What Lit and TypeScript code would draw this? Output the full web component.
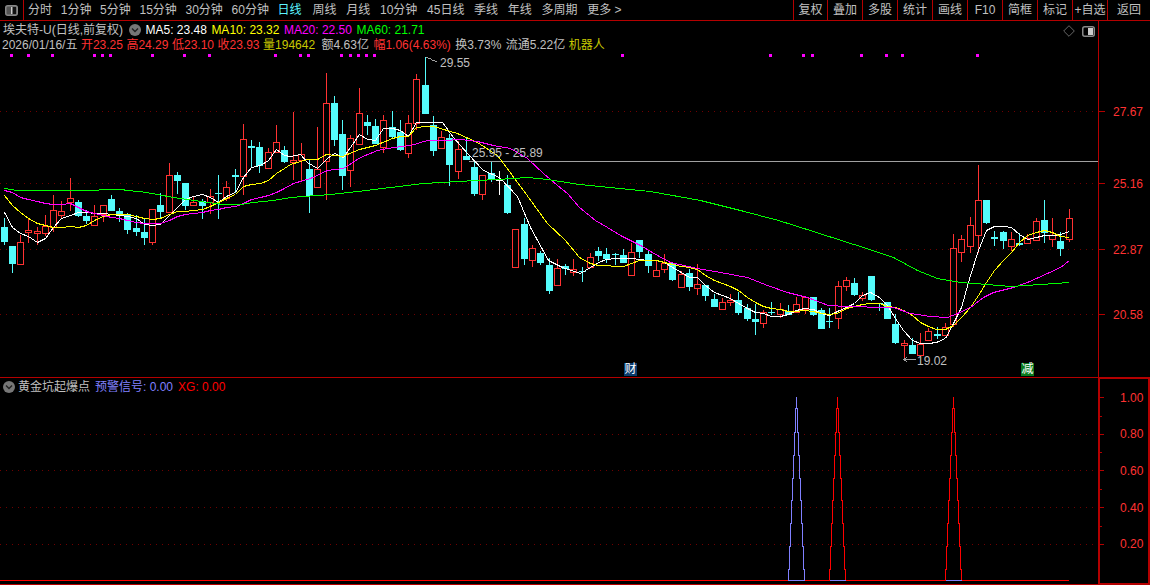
import { LitElement, html, svg, css } from "lit";
import { customElement } from "lit/decorators.js";

// candle: [kind, high, top, bottom, low]; kind r=rising (hollow red), c=falling (cyan), w=doji white
type C = [string, number, number, number, number];
const CANDLES: C[] = [
["c",218,227,242,245],["c",246,246,264,273],["r",235,242,264,264],["r",218,230,232,243],["r",227,231,233,245],
["r",215,226,233,236],["r",195,210,227,232],["r",201,211,215,219],["r",178,198,202,211],["c",200,202,216,217],
["c",210,216,221,224],["r",205,216,225,225],["r",205,205,214,222],["c",195,199,211,211],["c",208,211,214,222],
["c",213,214,230,234],["c",215,228,232,236],["c",219,232,238,245],["r",209,209,242,245],["c",193,205,212,218],
["r",163,175,212,212],["c",172,175,181,194],["c",183,183,206,210],["r",196,202,205,205],["c",199,201,206,219],
["r",189,196,202,214],["c",175,193,194,219],["r",181,187,198,201],["c",169,175,177,193],["r",124,139,176,195],
["c",140,146,148,167],["c",142,147,166,173],["r",148,152,168,168],["r",125,142,152,152],["c",146,150,162,163],
["r",112,160,162,180],["r",143,154,160,181],["c",160,169,196,213],["r",127,169,187,187],["r",73,103,161,200],
["c",96,103,140,146],["c",120,134,176,190],["r",135,138,170,187],["r",88,113,144,144],["c",115,122,126,135],
["c",119,126,144,144],["r",115,120,147,153],["c",111,127,137,138],["c",120,132,150,151],["r",115,123,153,158],
["r",74,79,123,130],["c",57,85,114,114],["c",116,125,151,156],["r",131,137,148,148],["c",134,138,165,186],
["r",141,149,171,179],["c",138,156,160,160],["c",161,167,194,196],["r",175,175,194,200],["c",162,173,180,182],
["w",171,180,181,195],["c",175,185,213,214],["r",229,229,267,267],["c",218,224,259,265],["r",245,248,260,267],
["c",251,253,263,265],["c",258,265,291,294],["r",259,268,285,285],["c",264,266,269,275],["r",259,269,272,276],
["c",267,271,272,282],["r",253,257,267,267],["c",247,251,256,261],["c",248,254,259,263],["c",253,254,255,265],
["c",249,255,263,263],["r",243,252,275,275],["c",240,240,252,258],["c",251,254,266,273],["r",261,270,276,277],
["r",254,263,269,273],["c",262,263,280,281],["r",271,274,287,287],["c",269,273,287,291],["r",264,284,288,295],
["c",285,285,296,301],["c",294,299,307,307],["r",298,302,309,309],["r",294,300,302,306],["c",292,300,313,315],
["c",304,308,319,321],["c",304,319,322,335],["r",310,312,323,328],["c",302,312,313,315],["r",303,309,314,318],
["c",305,311,315,315],["r",297,304,312,312],["r",296,297,309,314],["c",297,297,315,316],["c",308,310,329,329],
["c",308,321,322,328],["r",281,286,318,329],["r",277,280,286,291],["c",278,283,295,296],["r",292,295,298,301],
["c",276,276,300,301],["c",303,303,304,311],["c",302,302,319,319],["c",314,324,343,344],["r",340,343,345,361],
["c",338,345,354,354],["r",333,344,355,355],["r",328,331,340,340],["c",327,334,336,339],["r",323,327,335,335],
["r",234,248,324,327],["r",235,239,252,262],["r",217,225,246,253],["r",165,200,235,253],["c",200,200,223,224],
["c",231,237,239,246],["c",231,232,241,249],["r",232,239,246,251],["c",233,243,245,246],["r",234,238,243,243],
["r",218,221,240,240],["c",200,220,233,243],["r",218,235,239,247],["c",232,241,249,256],["r",209,218,239,242],
];

const MA5 = [[4,212],[12,227],[20,233],[28,236],[37,242],[45,238],[53,227],[61,218],[70,215],[78,212],[86,212],[94,213],[103,213],[111,214],[119,215],[127,216],[136,218],[144,224],[152,225],[160,224],[169,215],[177,207],[185,199],[193,196],[202,194],[210,197],[218,202],[226,196],[235,192],[243,177],[251,167],[260,165],[268,160],[276,149],[284,155],[290,156],[300,154],[307,162],[317,168],[327,158],[334,153],[343,157],[359,134],[367,139],[375,140],[383,128],[392,128],[400,130],[408,136],[416,122],[425,122],[433,122],[442,122],[453,137],[467,153],[483,170],[499,177],[517,196],[530,227],[548,260],[562,267],[580,273],[590,267],[598,262],[606,259],[615,258],[623,258],[631,258],[639,259],[648,260],[656,260],[664,262],[672,267],[681,272],[689,277],[697,277],[705,285],[714,292],[722,295],[730,298],[738,303],[747,308],[755,312],[763,313],[771,316],[780,316],[788,314],[796,310],[804,308],[813,309],[821,313],[829,315],[837,311],[846,307],[854,303],[862,295],[870,292],[879,297],[887,305],[895,318],[903,330],[912,340],[920,343],[928,343],[936,342],[945,338],[953,323],[961,307],[970,275],[978,250],[986,230],[994,226],[1003,226],[1011,227],[1019,234],[1027,239],[1036,237],[1044,235],[1052,235],[1060,234],[1069,231]];
const MA10 = [[4,195],[12,205],[20,212],[28,218],[37,223],[45,225],[53,227],[61,227],[70,226],[78,227],[86,225],[94,220],[103,216],[111,214],[119,214],[127,214],[136,216],[144,218],[152,219],[160,218],[169,214],[177,211],[185,211],[193,210],[202,209],[210,206],[218,202],[226,198],[235,194],[243,186],[251,184],[260,183],[268,180],[276,173],[284,168],[290,164],[307,159],[317,159],[326,154],[342,156],[359,149],[375,145],[392,138],[400,136],[408,136],[416,127],[425,126],[433,126],[457,133],[477,142],[497,155],[523,190],[547,223],[565,240],[579,257],[590,263],[598,265],[606,265],[615,266],[623,266],[631,263],[639,260],[648,260],[656,260],[664,262],[672,264],[681,266],[689,267],[697,269],[705,275],[714,280],[722,283],[730,286],[738,290],[747,297],[755,302],[763,306],[771,308],[780,309],[788,311],[796,311],[804,310],[813,311],[821,313],[829,314],[837,313],[846,308],[854,306],[862,304],[870,303],[879,303],[887,306],[895,307],[903,310],[912,315],[920,322],[928,326],[936,329],[945,329],[953,325],[961,317],[970,307],[978,295],[986,282],[994,270],[1003,260],[1011,252],[1019,242],[1027,235],[1036,232],[1044,230],[1052,232],[1060,236],[1069,237]];
const MA20 = [[4,190],[12,192],[20,197],[28,199],[37,201],[45,203],[53,204],[61,204],[70,203],[78,207],[86,211],[94,213],[103,215],[111,217],[119,218],[127,220],[136,222],[144,223],[152,223],[160,223],[169,220],[177,216],[185,214],[193,213],[202,212],[210,210],[218,209],[226,207],[235,206],[243,203],[251,199],[260,197],[268,195],[276,192],[284,188],[293,183],[310,178],[327,170],[343,168],[360,157],[377,150],[393,147],[410,145],[427,140],[443,140],[460,139],[477,141],[493,145],[510,148],[527,158],[543,173],[557,185],[567,193],[579,207],[595,220],[607,227],[620,235],[640,245],[657,255],[670,262],[697,268],[720,272],[747,277],[767,285],[787,292],[807,297],[828,305],[847,306],[860,306],[873,307],[893,307],[910,313],[930,316],[947,317],[957,313],[970,307],[983,297],[993,292],[1013,287],[1027,282],[1047,273],[1060,267],[1069,260]];
const MA60 = [[4,188],[17,190],[97,190],[100,189],[123,189],[125,190],[140,191],[157,194],[173,197],[187,199],[207,202],[223,204],[240,204],[253,202],[273,200],[290,197],[330,194],[357,191],[390,187],[423,183],[457,181],[497,179],[527,177],[547,179],[579,184],[650,191],[700,200],[740,210],[778,220],[813,231],[847,242],[860,246],[893,257],[917,270],[937,278],[960,282],[987,284],[1010,286],[1040,284],[1069,282]];

const SIGNALS = [11,28,52,94,102,110,152,184,209,275,300,308,341,350,358,366,374,622,770,803,812,861,886,902,977];
const TABS_A = ["分时","1分钟","5分钟","15分钟","30分钟","60分钟","日线"];
const TABS_B = ["周线","月线","10分钟","45日线","季线","年线","多周期","更多 >"];
const TOOLS = ["复权","叠加","多股","统计","画线","F10","简框","标记","+自选","返回"];
const GRID_TOP = [111,183,249,314];
const GRID_SUB = [434,470,507,544];
const PX_AXIS: [number, string][] = [[116,"27.67"],[188,"25.16"],[254,"22.87"],[319,"20.58"]];
const SUB_AXIS: [number, string][] = [[402,"1.00"],[438,"0.80"],[475,"0.60"],[512,"0.40"],[548,"0.20"]];
const STEP_Y = [397,408,432,455,478,500,523,546,569,580];

const cx = (i: number) => Math.floor(4 + i * 8.2578);
const pts = (a: number[][]) => a.map(([x, y]) => `${x + 0.5},${y + 0.5}`).join(" ");

// staircase outline of one indicator spike: up the left side, down the right
function spike(c: number): string {
  const left: string[] = [];
  const right: string[] = [];
  for (let i = 0; i < STEP_Y.length - 1; i++) {
    left.unshift(`${c - i + 0.5},${STEP_Y[i + 1]}`, `${c - i + 0.5},${STEP_Y[i]}`);
    right.push(`${c + i + 0.5},${STEP_Y[i]}`, `${c + i + 0.5},${STEP_Y[i + 1]}`);
  }
  return [...left, ...right].join(" ");
}

@customElement("app-root")
export class AppRoot extends LitElement {
  static styles = css`
    :host {
      display: block;
      width: 1150px;
      height: 585px;
      background: #000;
      overflow: hidden;
      color: #c0c0c0;
      font: 12px/14px "Liberation Sans", "Noto Sans CJK SC", sans-serif;
    }
    .nav { display: flex; height: 20px; border-bottom: 1px solid #b40000; }
    .layout-btn { width: 23px; display: flex; align-items: center; justify-content: center; border-right: 1px solid #b40000; }
    .tabs { display: flex; align-items: center; padding-left: 4px; flex: 1; gap: 11px; }
    .group-a { display: flex; gap: 8.7px; }
    .group-b { display: flex; gap: 9.7px; }
    .tabs .on { color: #5cf4ff; }
    .tools { display: flex; }
    .tool { width: 35px; box-sizing: border-box; border-left: 1px solid #b40000; display: flex; align-items: center; justify-content: center; white-space: nowrap; }
    .tool:last-child { width: 43px; }
    .tool:first-child { width: 34px; }
    .panel { display: flex; }
    .top { height: 356px; }
    .bottom { height: 208px; }
    .plot { width: 1098px; position: relative; flex: none; }
    .bottom .plot { border-top: 1px solid #b40000; border-bottom: 1px solid #b40000; box-sizing: border-box; }
    svg.layer { position: absolute; left: 0; top: 0; display: block; }
    .top svg.layer { width: 1098px; height: 356px; }
    .bottom svg.layer { width: 1098px; height: 206px; }
    .axis { flex: 1; display: block; }
    .top .axis { border-left: 1px solid #b40000; }
    .bottom .axis { border: 2px solid #b40000; box-sizing: border-box; }
    .axis svg { display: block; width: 100%; height: 100%; }
    .info { position: relative; display: flex; align-items: center; white-space: nowrap; height: 15px; }
    .r1 { padding: 1px 0 0 3px; gap: 4.5px; }
    .r2 { padding-left: 2px; gap: 3.5px; }
    .r3 { padding: 1px 0 0 3px; gap: 5px; }
    .marks { position: absolute; top: 4px; right: 3px; display: flex; align-items: center; gap: 7px; }
    .white { color: #fff; } .yellow { color: #ffff00; } .pink { color: #ff00ff; } .green { color: #00ff00; }
    .red { color: #ff3232; } .olive { color: #c8c800; } .blue { color: #8080ff; } .pure { color: #ff0000; }
    .after-title { margin-left: 1.5px; }
    .after-icon { margin-left: -2px; }
    .m1 { margin-left: 1px; }
    .m3 { margin-left: 3px; }
    .badge { position: absolute; top: 342px; width: 13px; height: 13px; color: #fff; display: flex; align-items: center; justify-content: center; font-size: 12px; line-height: 13px; }
    .cai { left: 624px; background: #0a3c6e; }
    .jian { left: 1021px; background: #0a7a1e; }
    svg text { font: 12px "Liberation Sans", "Noto Sans CJK SC", sans-serif; }
    .label { fill: #c0c0c0; }
    .tick-label { fill: #ff3232; }
  `;

  private chevron(cls = "") {
    return html`<svg class=${cls} width="12" height="12" viewBox="0 0 12 12"><circle cx="6" cy="6" r="6" fill="#777"/><path d="M3 4.5 6 7.5 9 4.5" fill="none" stroke="#222" stroke-width="1.4"/></svg>`;
  }

  private priceChart() {
    return svg`<svg class="layer" viewBox="0 21 1098 356" shape-rendering="crispEdges">
      ${GRID_TOP.map((y) => svg`<line x1="0" x2="1098" y1=${y + 0.5} y2=${y + 0.5} stroke="#700000" stroke-dasharray="1 5"/>`)}
      ${SIGNALS.map((x) => svg`<rect x=${x - 1} y="54" width="3" height="3" fill="#ff00ff"/>`)}
      <line x1="469" x2="1098" y1="161.5" y2="161.5" stroke="#a0a0a0"/>
      ${CANDLES.map((c, i) => {
        const x = cx(i);
        const [k, hi, top, bot, lo] = c;
        const col = k === "r" ? "#ff3232" : k === "w" ? "#ffffff" : "#54fcfc";
        if (k === "r") {
          return svg`<line x1=${x + 0.5} x2=${x + 0.5} y1=${hi} y2=${top} stroke=${col}/>
            <line x1=${x + 0.5} x2=${x + 0.5} y1=${bot} y2=${lo} stroke=${col}/>
            <rect x=${x - 2.5} y=${top + 0.5} width="6" height=${Math.max(bot - top, 1)} fill="#000" stroke=${col}/>`;
        }
        return svg`<line x1=${x + 0.5} x2=${x + 0.5} y1=${hi} y2=${lo} stroke=${col}/>
          <rect x=${x - 3} y=${top} width="7" height=${Math.max(bot - top, 1)} fill=${col}/>`;
      })}
      <polyline points=${pts(MA5)} fill="none" stroke="#ffffff"/>
      <polyline points=${pts(MA10)} fill="none" stroke="#ffff00"/>
      <polyline points=${pts(MA20)} fill="none" stroke="#ff00ff"/>
      <polyline points=${pts(MA60)} fill="none" stroke="#00ff00"/>
      <polyline points="426,57.5 430,58.5 433,60.5 437,61.5" fill="none" stroke="#a0a0a0"/>
      <text class="label" x="440" y="67">29.55</text>
      <text class="label" x="472" y="157">25.95 - 25.89</text>
      <polyline points="907,357 904,359.5 907,362" fill="none" stroke="#a0a0a0"/>
      <line x1="904" x2="916" y1="359.5" y2="359.5" stroke="#a0a0a0"/>
      <text class="label" x="917" y="365">19.02</text>
    </svg>`;
  }

  private priceAxis() {
    return svg`<svg viewBox="1099 21 51 356" shape-rendering="crispEdges">
      ${GRID_TOP.map((y) => svg`<line x1="1099" x2="1105" y1=${y + 0.5} y2=${y + 0.5} stroke="#b40000"/>`)}
      ${PX_AXIS.map(([y, t]) => svg`<text class="tick-label" x="1113" y=${y} shape-rendering="auto">${t}</text>`)}
    </svg>`;
  }

  private subChart() {
    return svg`<svg class="layer" viewBox="0 378 1098 206" shape-rendering="crispEdges">
      ${GRID_SUB.map((y) => svg`<line x1="0" x2="1098" y1=${y + 0.5} y2=${y + 0.5} stroke="#700000" stroke-dasharray="1 5"/>`)}
      <line x1="0" x2="1069" y1="580.5" y2="580.5" stroke="#ff0000"/>
      <line x1="788" x2="805" y1="580.5" y2="580.5" stroke="#8080ff"/>
      <line x1="830" x2="846" y1="580.5" y2="580.5" stroke="#8080ff"/>
      <line x1="946" x2="962" y1="580.5" y2="580.5" stroke="#8080ff"/>
      <polyline points=${spike(796)} fill="none" stroke="#8080ff"/>
      <polyline points=${spike(837)} fill="none" stroke="#ff0000"/>
      <polyline points=${spike(953)} fill="none" stroke="#ff0000"/>
    </svg>`;
  }

  private subAxis() {
    return svg`<svg viewBox="1100 379 48 204" shape-rendering="crispEdges">
      ${[397, 434, 470, 507, 544].map((y) => svg`<line x1="1100" x2="1104" y1=${y + 0.5} y2=${y + 0.5} stroke="#b40000"/>`)}
      ${[416, 452, 489, 526].map((y) => svg`<line x1="1100" x2="1102" y1=${y + 0.5} y2=${y + 0.5} stroke="#b40000"/>`)}
      ${SUB_AXIS.map(([y, t]) => svg`<text class="tick-label" x="1120" y=${y} shape-rendering="auto">${t}</text>`)}
    </svg>`;
  }

  render() {
    return html`
      <div class="nav">
        <div class="layout-btn">
          <svg width="13" height="11" viewBox="0 0 13 11"><rect x=".75" y=".75" width="11.5" height="9.5" rx="2" fill="#555" stroke="#888" stroke-width="1.5"/><rect x="7" y="2" width="4" height="7" fill="#111"/><rect x="6" y="2" width="1.5" height="7" fill="#ccc"/></svg>
        </div>
        <div class="tabs">
          <div class="group-a">${TABS_A.map((t) => html`<span class=${t === "日线" ? "on" : ""}>${t}</span>`)}</div>
          <div class="group-b">${TABS_B.map((t) => html`<span>${t}</span>`)}</div>
        </div>
        <div class="tools">${TOOLS.map((t) => html`<div class="tool">${t}</div>`)}</div>
      </div>
      <div class="panel top">
        <div class="plot">
          ${this.priceChart()}
          <div class="info r1">
            <span>埃夫特-U(日线,前复权)</span>
            ${this.chevron("after-title")}
            <span class="white">MA5: 23.48</span>
            <span class="yellow">MA10: 23.32</span>
            <span class="pink">MA20: 22.50</span>
            <span class="green">MA60: 21.71</span>
          </div>
          <div class="info r2">
            <span>2026/01/16/五</span>
            <span class="red">开23.25</span>
            <span class="red">高24.29</span>
            <span class="red">低23.10</span>
            <span class="red">收23.93</span>
            <span class="olive">量194642</span>
            <span class="m3">额4.63亿</span>
            <span class="red m1">幅1.06(4.63%)</span>
            <span class="m1">换3.73%</span>
            <span class="m1">流通5.22亿</span>
            <span class="olive">机器人</span>
          </div>
          <div class="marks">
            <svg width="12" height="12" viewBox="0 0 12 12"><path d="M6 .7 11.3 6 6 11.3 .7 6Z" fill="none" stroke="#666"/></svg>
            <svg width="13" height="11" viewBox="0 0 13 11"><rect x=".75" y=".75" width="11.5" height="9.5" rx="2" fill="#000" stroke="#888" stroke-width="1.5"/><rect x="6" y="2" width="5" height="7" fill="#ccc"/></svg>
          </div>
          <div class="badge cai">财</div>
          <div class="badge jian">减</div>
        </div>
        <div class="axis">${this.priceAxis()}</div>
      </div>
      <div class="panel bottom">
        <div class="plot">
          ${this.subChart()}
          <div class="info r3">
            ${this.chevron()}
            <span class="after-icon">黄金坑起爆点</span>
            <span class="blue">预警信号: 0.00</span>
            <span class="pure">XG: 0.00</span>
          </div>
        </div>
        <div class="axis">${this.subAxis()}</div>
      </div>
    `;
  }
}
